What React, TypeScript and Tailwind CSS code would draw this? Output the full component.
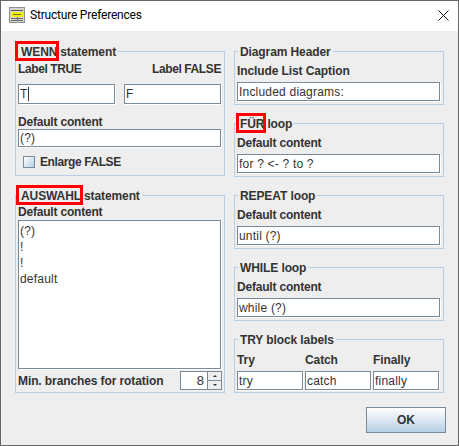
import React from "react";

const ui = "font-['Liberation_Sans',Arial,sans-serif] text-[12px] leading-[14px] text-[#333333]";

function Field({ value, className = "", caret = false }: { value: string; className?: string; caret?: boolean }) {
  return (
    <div className={"flex items-center bg-white border border-[#7a8a99] shadow-[1px_1px_0_#ffffff] pl-[1px] font-normal tracking-[0.2px] overflow-hidden whitespace-nowrap " + className}>
      <span>{value}</span>
      {caret && <span className="w-px h-[14px] bg-[#333333]" />}
    </div>
  );
}

function Group({ title, mark, markClass = "", className = "", children }: { title: string; mark?: string; markClass?: string; className?: string; children: React.ReactNode }) {
  return (
    <fieldset className={"border border-[#b8cfe5] px-[2px] min-w-0 " + className}>
      <legend className="ml-[1px] px-[2px] font-bold h-[16px] leading-[18px] whitespace-nowrap tracking-[-0.1px]">
        {mark && (
          <span className="relative mr-[3px]">
            {mark}
            <span className={"absolute -top-[4px] -bottom-[2px] border-[3px] border-[#ff0000] " + markClass} />
          </span>
        )}
        {title}
      </legend>
      {children}
    </fieldset>
  );
}

function Label({ children, className = "", track = "tracking-[-0.1px]" }: { children: React.ReactNode; className?: string; track?: string }) {
  return <div className={"font-bold " + track + " " + className}>{children}</div>;
}

function Simple({ title, mark, markClass, label, value, track }: { title: string; mark?: string; markClass?: string; label: string; value: string; track?: string }) {
  return (
    <Group title={title} mark={mark} markClass={markClass} className="h-[62px]">
      <Label className="mt-[5px]" track={track}>{label}</Label>
      <Field value={value} className="h-[19px] mt-[4px] mr-[1px]" />
    </Group>
  );
}

function TitleIcon() {
  return (
    <svg width="16" height="16" viewBox="0 0 16 16" className="shrink-0">
      <rect x="0" y="0" width="16" height="16" fill="#8f8f8f" />
      <rect x="1" y="1" width="14" height="14" fill="#d4d4d4" />
      <rect x="2" y="3" width="12" height="1" fill="#555555" />
      <rect x="2" y="5" width="12" height="5" fill="#f2ee00" />
      <rect x="4" y="7" width="8" height="1" fill="#77771a" />
      <rect x="2" y="11" width="12" height="1" fill="#6a6a6a" />
      <rect x="2" y="13" width="12" height="1" fill="#6a6a6a" />
      <rect x="8" y="10" width="1" height="4" fill="#6a6a6a" />
    </svg>
  );
}

const tight = "tracking-[-0.2px]";
const tighter = "tracking-[-0.4px]";

export default function App() {
  return (
    <div className={"w-[459px] h-[446px] bg-[#eeeeee] border border-[#666666] overflow-hidden flex flex-col " + ui}>
      <div className="h-[30px] bg-white flex items-center pl-[8px] pr-[9px] pb-[2px] shrink-0">
        <TitleIcon />
        <span className="ml-[5px] font-['Roboto',sans-serif] text-[12px] tracking-[-0.2px] text-black">Structure Preferences</span>
        <svg width="11" height="11" viewBox="0 0 11 11" className="ml-auto">
          <path d="M0.5 0.5 L10.5 10.5 M10.5 0.5 L0.5 10.5" stroke="#111111" strokeWidth="1" fill="none" />
        </svg>
      </div>
      <div className="flex gap-[9px] pl-[14px] pt-[12px]">
        <div className="w-[210px] flex flex-col gap-[11px]">
          <Group title="statement" mark="WENN" markClass="-left-[6px] -right-[2px]" className="h-[133px]">
            <div className="flex justify-between mt-[3px] mr-[1px]">
              <Label track={tighter}>Label TRUE</Label>
              <Label track={tighter}>Label FALSE</Label>
            </div>
            <div className="flex gap-[9px] mt-[8px] mr-[1px]">
              <Field value="T" caret className="h-[20px] w-[97px]" />
              <Field value="F" className="h-[20px] w-[97px]" />
            </div>
            <Label className="mt-[11px]" track={tight}>Default content</Label>
            <Field value="(?)" className="h-[18px] mr-[1px]" />
            <div className="flex items-center mt-[8px] ml-[5px] font-bold tracking-[-0.4px]">
              <span className="w-[12px] h-[12px] border border-[#7a8a99] bg-gradient-to-br from-white to-[#b8cfe5]" />
              <span className="ml-[5px]">Enlarge FALSE</span>
            </div>
          </Group>
          <Group title="statement" mark="AUSWAHL" markClass="-left-[5px] -right-[2px]" className="h-[206px]">
            <Label className="mt-[2px]" track={tight}>Default content</Label>
            <div className="h-[149px] mt-[1px] mr-[1px] bg-white border border-[#7a8a99] shadow-[1px_1px_0_#ffffff] pl-[1px] pt-[2px] font-normal tracking-[0.2px] leading-[16px]">
              <div>(?)</div>
              <div>!</div>
              <div>!</div>
              <div>default</div>
            </div>
            <div className="flex items-center h-[20px] mt-[1px]">
              <Label className="pt-[1px]">Min. branches for rotation</Label>
              <div className="ml-auto flex h-[19px] w-[42px] mt-[1px]">
                <div className="flex-1 bg-white border border-[#7a8a99] border-r-0 text-right pr-[3px] font-normal text-[13px] leading-[17px]">8</div>
                <div className="w-[15px] flex flex-col">
                  <div className="flex-1 border border-[#7a8a99] flex items-center justify-center bg-[#eeeeee]">
                    <span className="w-0 h-0 border-x-[2px] border-x-transparent border-b-[2px] border-b-[#333333]" />
                  </div>
                  <div className="flex-1 border border-t-0 border-[#7a8a99] flex items-center justify-center bg-[#eeeeee]">
                    <span className="w-0 h-0 border-x-[2px] border-x-transparent border-t-[2px] border-t-[#333333]" />
                  </div>
                </div>
              </div>
            </div>
          </Group>
        </div>
        <div className="w-[210px] flex flex-col gap-[10px]">
          <Simple title="Diagram Header" label="Include List Caption" value="Included diagrams:" />
          <Simple title="loop" mark="FÜR" markClass="-left-[4px] -right-[2px]" label="Default content" value="for ? <- ? to ?" track={tight} />
          <Simple title="REPEAT loop" label="Default content" value="until (?)" track={tight} />
          <Simple title="WHILE loop" label="Default content" value="while (?)" track={tight} />
          <Group title="TRY block labels" className="h-[62px]">
            <div className="grid grid-cols-3 gap-x-[2px] mt-[6px] mr-[2px]">
              <Label>Try</Label>
              <Label>Catch</Label>
              <Label>Finally</Label>
              <Field value="try" className="h-[19px] mt-[4px]" />
              <Field value="catch" className="h-[19px] mt-[4px]" />
              <Field value="finally" className="h-[19px] mt-[4px]" />
            </div>
          </Group>
          <div className="flex justify-end -mr-[2px] mt-[4px]">
            <button className="w-[80px] h-[26px] border border-[#7a8a99] bg-gradient-to-b from-white to-[#b8cfe5] font-bold text-[12px] text-[#333333]">OK</button>
          </div>
        </div>
      </div>
    </div>
  );
}
